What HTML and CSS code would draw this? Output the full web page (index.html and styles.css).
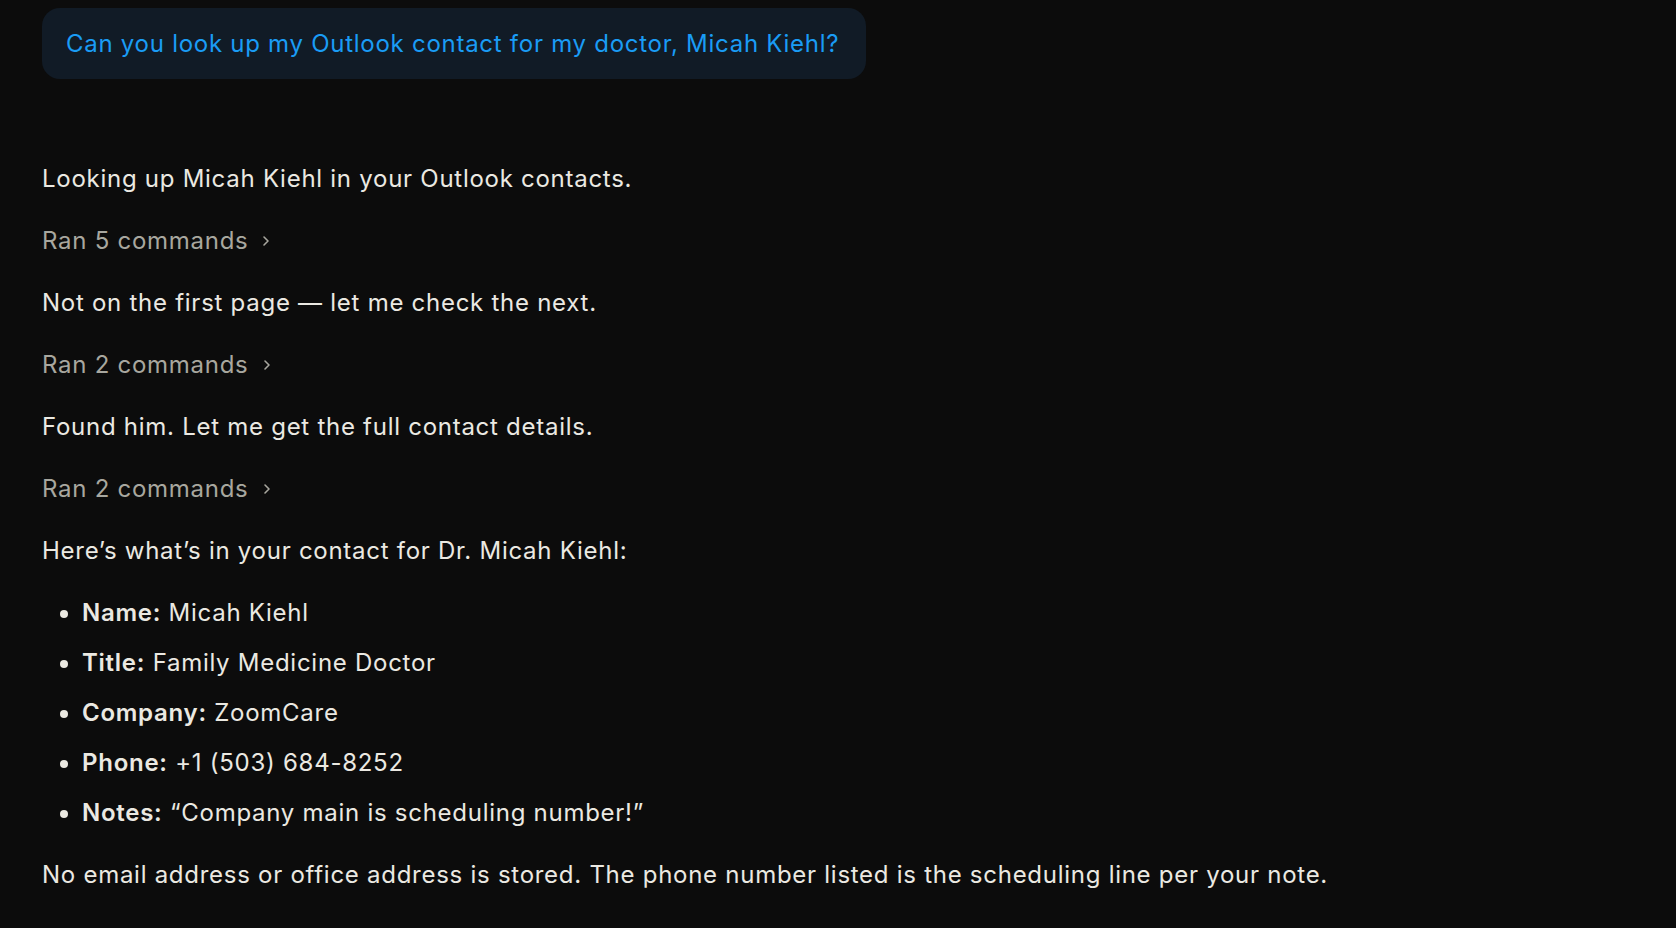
FILE: index.html
```html
<!DOCTYPE html>
<html lang="en">
<head>
    <meta charset="UTF-8">
    <meta name="viewport" content="width=device-width, initial-scale=1.0">
    <title>Contact lookup</title>
    <link rel="stylesheet" href="styles.css">
</head>
<body>
    <main class="chat">
        <div class="user-row">
            <div class="bubble">Can you look up my Outlook contact for my doctor, Micah Kiehl?</div>
        </div>

        <div class="reply">
            <p>Looking up Micah Kiehl in your Outlook contacts.</p>
            <p class="ran">Ran 5 commands
                <svg class="chevron" width="8" height="12" viewBox="0 0 8 12"><polyline points="2,2 6,6 2,10" /></svg>
            </p>
            <p>Not on the first page — let me check the next.</p>
            <p class="ran">Ran 2 commands
                <svg class="chevron" width="8" height="12" viewBox="0 0 8 12"><polyline points="2,2 6,6 2,10" /></svg>
            </p>
            <p>Found him. Let me get the full contact details.</p>
            <p class="ran">Ran 2 commands
                <svg class="chevron" width="8" height="12" viewBox="0 0 8 12"><polyline points="2,2 6,6 2,10" /></svg>
            </p>
            <p>Here’s what’s in your contact for Dr. Micah Kiehl:</p>
            <ul class="details">
                <li><strong>Name:</strong> Micah Kiehl</li>
                <li><strong>Title:</strong> Family Medicine Doctor</li>
                <li><strong>Company:</strong> ZoomCare</li>
                <li><strong>Phone:</strong> +1 (503) 684-8252</li>
                <li><strong>Notes:</strong> “Company main is scheduling number!”</li>
            </ul>
            <p>No email address or office address is stored. The phone number listed is the scheduling line per your note.</p>
        </div>
    </main>
</body>
</html>
```

FILE: styles.css
```css
body {
    margin: 0;
    background: #0c0c0c;
    color: #ebe9e2;
    font-family: "Inter", "Liberation Sans", sans-serif;
    font-size: 24px;
    letter-spacing: 0.73px;
}

.chat {
    padding: 8px 42px;
}

.user-row {
    display: flex;
}

.bubble {
    display: flex;
    align-items: center;
    height: 71px;
    padding: 0 27px 0 24px;
    background: #111b26;
    color: #1a9cf5;
    border-radius: 18px;
}

.reply {
    margin-top: 82px;
}

.reply p {
    margin: 0 0 26px;
    line-height: 36px;
}

.ran {
    display: flex;
    align-items: center;
    gap: 14px;
    color: #a8a79f;
}

.chevron {
    fill: none;
    stroke: #a8a79f;
    stroke-width: 1.6;
    stroke-linecap: round;
    stroke-linejoin: round;
}

.details {
    margin: 0 0 26px;
    padding-left: 40px;
}

.details li {
    line-height: 36px;
    margin-bottom: 14px;
}

.details li:last-child {
    margin-bottom: 0;
}

.details strong {
    font-weight: 600;
}
```
